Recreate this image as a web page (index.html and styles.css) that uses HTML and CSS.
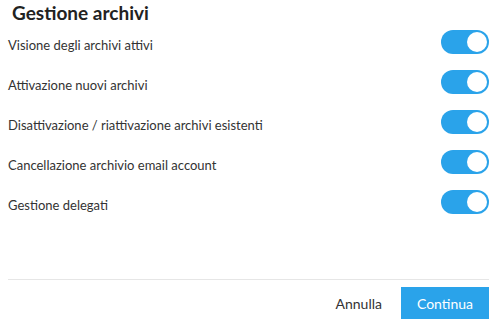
FILE: index.html
```html
<!DOCTYPE html>
<html lang="it">
<head>
  <meta charset="UTF-8" />
  <title>Gestione archivi</title>
  <link rel="stylesheet" href="styles.css">
</head>
<body>
  <div class="dialog">
    <h2 class="title">Gestione archivi</h2>

    <div class="options">
      <div class="option">
        <span class="label">Visione degli archivi attivi</span>
        <label class="switch"><input type="checkbox" checked><span class="slider"></span></label>
      </div>
      <div class="option">
        <span class="label">Attivazione nuovi archivi</span>
        <label class="switch"><input type="checkbox" checked><span class="slider"></span></label>
      </div>
      <div class="option">
        <span class="label">Disattivazione / riattivazione archivi esistenti</span>
        <label class="switch"><input type="checkbox" checked><span class="slider"></span></label>
      </div>
      <div class="option">
        <span class="label">Cancellazione archivio email account</span>
        <label class="switch"><input type="checkbox" checked><span class="slider"></span></label>
      </div>
      <div class="option">
        <span class="label">Gestione delegati</span>
        <label class="switch"><input type="checkbox" checked><span class="slider"></span></label>
      </div>
    </div>

    <div class="footer">
      <button class="btn-cancel">Annulla</button>
      <button class="btn-confirm">Continua</button>
    </div>
  </div>
</body>
</html>
```

FILE: styles.css
```css
body {
  margin: 0;
  font-family: "Lato", "Open Sans", sans-serif;
  color: #333;
  background: #fff;
}

.dialog {
  width: 498px;
  height: 331px;
  padding: 0 9px 0 8px;
  box-sizing: border-box;
  display: flex;
  flex-direction: column;
}

.title {
  margin: 0;
  padding: 1px 0 0 4px;
  font-size: 19px;
  font-weight: 700;
  line-height: 24px;
  color: #222;
}

.options {
  margin-top: -3px;
  flex: 1;
}

.option {
  display: flex;
  justify-content: space-between;
  align-items: center;
  height: 40px;
  font-size: 13px;
}

.label {
  padding-top: 6px;
}

.switch {
  position: relative;
  width: 48px;
  height: 24px;
}

.switch input {
  display: none;
}

.slider {
  position: absolute;
  inset: 0;
  background: #2aa3ea;
  border-radius: 12px;
}

.slider::after {
  content: "";
  position: absolute;
  top: 2px;
  right: 2px;
  width: 20px;
  height: 20px;
  border-radius: 50%;
  background: #fff;
}

.footer {
  border-top: 1px solid #e6e6e6;
  display: flex;
  justify-content: flex-end;
  align-items: center;
  gap: 19px;
  padding: 7px 0 12px;
}

.footer button {
  font-family: inherit;
  font-size: 14px;
  border: none;
  height: 32px;
  cursor: pointer;
}

.btn-cancel {
  background: none;
  color: #333;
  padding: 0;
}

.btn-confirm {
  width: 88px;
  background: #2aa3ea;
  color: #fff;
}
```
